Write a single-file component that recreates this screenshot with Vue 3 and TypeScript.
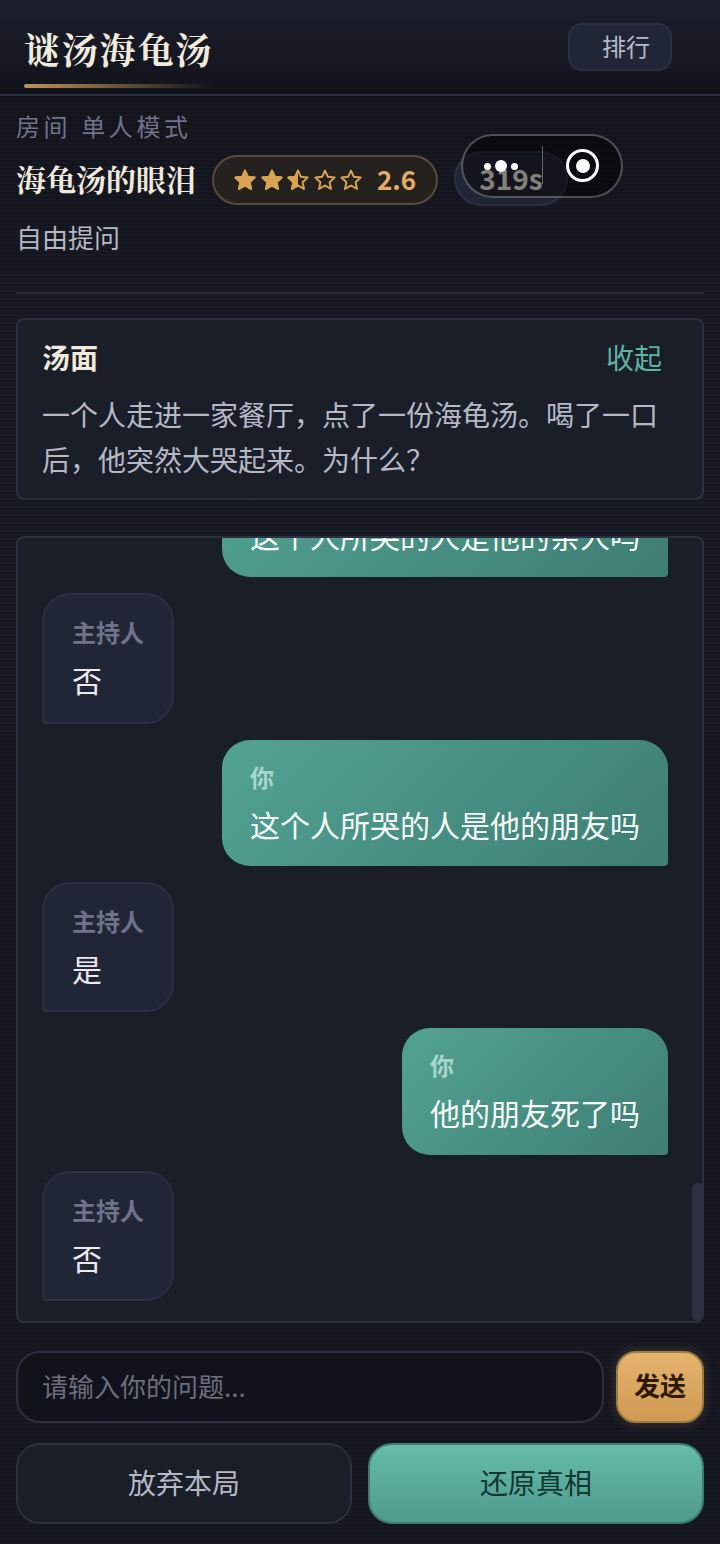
<template>
  <div class="page">
    <header class="top-bar">
      <div class="brand">
        <h1 class="brand-name">谜汤海龟汤</h1>
        <div class="brand-line"></div>
      </div>
      <button class="rank-btn">排行</button>
    </header>

    <section class="room">
      <div class="room-label"><span>房间</span><span>单人模式</span></div>
      <div class="room-row">
        <span class="room-title">海龟汤的眼泪</span>
        <div class="rating">
          <svg v-for="(s, i) in stars" :key="i" class="star" viewBox="0 0 24 24">
            <defs>
              <clipPath :id="'half' + i"><rect x="0" y="0" width="12" height="24" /></clipPath>
            </defs>
            <path :d="starPath" fill="none" stroke="#d9a352" stroke-width="2" stroke-linejoin="round" />
            <path v-if="s > 0" :d="starPath" fill="#d9a352" stroke="#d9a352" stroke-width="2" stroke-linejoin="round" :clip-path="s === 1 ? undefined : `url(#half${i})`" />
          </svg>
          <span class="rating-num">2.6</span>
        </div>
        <div class="timer">319s</div>
      </div>
      <div class="room-mode">自由提问</div>
      <div class="room-divider"></div>
    </section>

    <section class="card soup">
      <div class="soup-head">
        <span class="soup-title">汤面</span>
        <span class="soup-toggle">收起</span>
      </div>
      <p class="soup-text">一个人走进一家餐厅，点了一份海龟汤。喝了一口后，他突然大哭起来。为什么？</p>
    </section>

    <section class="card chat">
      <div v-for="(m, i) in messages" :key="i" class="bubble" :class="m.role">
        <div class="who">{{ m.role === 'user' ? '你' : '主持人' }}</div>
        <div class="said">{{ m.text }}</div>
      </div>
      <div class="scroll-thumb"></div>
    </section>

    <div class="input-row">
      <div class="ask">请输入你的问题...</div>
      <button class="send">发送</button>
    </div>

    <div class="actions">
      <button class="act quit">放弃本局</button>
      <button class="act reveal">还原真相</button>
    </div>

    <div class="capsule">
      <div class="dots"><i></i><b></b><i></i></div>
      <div class="cap-line"></div>
      <div class="ring"><span></span></div>
    </div>
  </div>
</template>

<script setup lang="ts">
interface Msg {
  role: 'user' | 'host'
  text: string
}

const starPath = 'M12 2.6l2.9 6.2 6.7.8-5 4.6 1.4 6.7-6-3.4-6 3.4 1.4-6.7-5-4.6 6.7-.8z'
const stars = [1, 1, 0.5, 0, 0]

const messages: Msg[] = [
  { role: 'user', text: '这个人所哭的人是他的亲人吗' },
  { role: 'host', text: '否' },
  { role: 'user', text: '这个人所哭的人是他的朋友吗' },
  { role: 'host', text: '是' },
  { role: 'user', text: '他的朋友死了吗' },
  { role: 'host', text: '否' },
]
</script>

<style>
html, body { margin: 0; background: #141620; }
</style>

<style scoped>
.page {
  position: relative;
  width: 720px;
  height: 1544px;
  overflow: hidden;
  display: flex;
  flex-direction: column;
  box-sizing: border-box;
  font-family: "Noto Sans CJK SC", "Noto Sans", sans-serif;
  background:
    repeating-linear-gradient(0deg, rgba(255,255,255,.012) 0 2px, rgba(0,0,0,.03) 2px 4px),
    linear-gradient(180deg, #111219 0%, #161823 20%, #141620 100%);
}
.top-bar {
  height: 96px;
  flex: none;
  box-sizing: border-box;
  border-bottom: 2px solid #2c2f3f;
  background: linear-gradient(180deg, #1b1e2c 0%, #11131c 100%);
  padding: 0 48px 0 24px;
  display: flex;
  justify-content: space-between;
}
.brand { width: 188px; }
.brand-name {
  margin: 24px 0 0;
  font-family: "Noto Serif CJK SC", "Liberation Serif", "Noto Sans CJK SC", serif;
  font-size: 36px;
  line-height: 50px;
  font-weight: 700;
  letter-spacing: 1.8px;
  color: #f0ebdd;
  white-space: nowrap;
}
.brand-line {
  margin-top: 10px;
  height: 4px;
  border-radius: 2px;
  background: linear-gradient(90deg, #c09355, rgba(192,147,85,0));
}
.rank-btn {
  margin-top: 23px;
  width: 104px;
  height: 48px;
  box-sizing: border-box;
  border: 2px solid #2b2f42;
  border-radius: 14px;
  background: #212637;
  color: #b6b8c6;
  font: 400 24px/42px "Noto Sans CJK SC", sans-serif;
  padding: 0 20px 2px 32px;
  text-align: right;
}
.room {
  padding: 12px 16px 0;
}
.room-label {
  display: flex;
  gap: 10px;
  font-size: 24px;
  line-height: 36px;
  letter-spacing: 3.6px;
  color: #70748a;
}
.room-row {
  margin-top: 7px;
  height: 58px;
  display: flex;
  align-items: center;
}
.room-title {
  padding-bottom: 4px;
  font-family: "Noto Serif CJK SC", "Liberation Serif", "Noto Sans CJK SC", serif;
  font-size: 30px;
  font-weight: 700;
  color: #f0ebdd;
  white-space: nowrap;
}
.rating {
  margin-left: 16px;
  width: 226px;
  height: 50px;
  box-sizing: border-box;
  border: 2px solid #5a4b38;
  border-radius: 25px;
  background: #24211f;
  padding: 0 20px 0 19px;
  display: flex;
  align-items: center;
  gap: 2.6px;
}
.star { width: 24px; height: 24px; flex: none; }
.rating-num {
  margin-left: 11px;
  padding-bottom: 3px;
  font-size: 26px;
  font-weight: 700;
  color: #e5ad63;
}
.timer {
  align-self: flex-start;
  margin-left: 16px;
  width: 114px;
  height: 55px;
  box-sizing: border-box;
  border: 2px solid #2b2f42;
  border-radius: 28px;
  background: #212637;
  text-align: center;
  font-size: 28px;
  font-weight: 700;
  line-height: 51px;
  color: #f0ebdd;
}
.room-mode {
  margin-top: 7px;
  font-size: 26px;
  line-height: 42px;
  color: #b6b8c6;
}
.room-divider {
  margin-top: 34px;
  height: 2px;
  background: #2c2f3f;
}
.card {
  margin: 0 16px;
  box-sizing: border-box;
  border: 2px solid #2c2f3f;
  border-radius: 8px;
  background: #1a1e29;
}
.soup {
  margin-top: 24px;
  height: 182px;
  padding: 17px 24px 0;
}
.soup-head {
  display: flex;
  justify-content: space-between;
  padding-right: 16px;
  line-height: 40px;
  font-size: 28px;
}
.soup-title { font-weight: 700; color: #f0ebdd; }
.soup-toggle { color: #5fb3a3; }
.soup-text {
  margin: 15px 0 0;
  font-size: 28px;
  line-height: 44.8px;
  color: #b6b8c6;
}
.chat {
  position: relative;
  margin-top: 36px;
  height: 787px;
  padding: 0 34px 20px 24px;
  display: flex;
  flex-direction: column;
  justify-content: flex-end;
  gap: 16px;
  overflow: hidden;
}
.bubble {
  box-sizing: border-box;
  flex: none;
}
.bubble.user {
  align-self: flex-end;
  height: 126.2px;
  padding: 20px 28px 0;
  border-radius: 28px 28px 4px 28px;
  background: linear-gradient(135deg, #52a394 0%, #3e7d74 100%);
  color: #f6fbf9;
}
.bubble.host {
  align-self: flex-start;
  height: 130.4px;
  width: 132px;
  padding: 20px 28px 0;
  border: 2px solid #2c2f42;
  border-radius: 28px 28px 28px 4px;
  background: #212637;
  color: #eceaf0;
}
.who {
  font-size: 24px;
  line-height: 34px;
  font-weight: 700;
}
.user .who { color: #a9d6cc; }
.host .who { color: #70748a; white-space: nowrap; }
.said {
  margin-top: 8px;
  font-size: 30px;
  line-height: 44px;
  white-space: nowrap;
}
.scroll-thumb {
  position: absolute;
  right: -2px;
  bottom: 0;
  width: 12px;
  height: 138px;
  border-radius: 6px;
  background: #2c3042;
}
.input-row {
  margin: 28px 16px 0;
  display: flex;
  gap: 12px;
}
.ask {
  flex: 1;
  height: 72px;
  box-sizing: border-box;
  border: 2px solid #2c2f3f;
  border-radius: 24px;
  background: #11131c;
  padding-left: 24px;
  font-size: 26px;
  line-height: 66px;
  color: #6c6e7c;
}
.send {
  width: 88px;
  height: 72px;
  box-sizing: border-box;
  border: 2px solid #9c7a48;
  border-radius: 20px;
  background: linear-gradient(180deg, #e5b46e 0%, #cf9a50 100%);
  box-shadow: 0 0 12px rgba(217,163,82,.25);
  font: 700 26px "Noto Sans CJK SC", sans-serif;
  color: #2f1a08;
  padding: 0 0 6px;
}
.actions {
  margin: 20px 16px 0;
  display: grid;
  grid-template-columns: 1fr 1fr;
  gap: 16px;
}
.act {
  height: 81px;
  box-sizing: border-box;
  border-radius: 24px;
  font: 400 28px "Noto Sans CJK SC", sans-serif;
  padding: 0 0 4px;
}
.quit {
  border: 2px solid #2c2f3f;
  background: #1a1e29;
  color: #b6b8c6;
}
.reveal {
  border: 2px solid #3f7a70;
  background: linear-gradient(180deg, #66bcab 0%, #4f9a8c 100%);
  color: #123630;
}
.capsule {
  position: absolute;
  left: 461px;
  top: 134px;
  width: 162px;
  height: 64px;
  box-sizing: border-box;
  border: 2px solid rgba(255,255,255,.28);
  border-radius: 32px;
  background: rgba(0,0,0,.45);
}
.dots {
  position: absolute;
  left: 21px;
  top: 23px;
  width: 34px;
  height: 14px;
  display: flex;
  align-items: center;
  justify-content: space-between;
}
.dots i { width: 7px; height: 7px; border-radius: 50%; background: #fff; }
.dots b { width: 12px; height: 12px; border-radius: 50%; background: #fff; }
.cap-line {
  position: absolute;
  left: 79px;
  top: 10px;
  width: 1px;
  height: 38px;
  background: rgba(255,255,255,.35);
}
.ring {
  position: absolute;
  left: 103px;
  top: 13px;
  width: 33px;
  height: 33px;
  box-sizing: border-box;
  border: 3px solid #fff;
  border-radius: 50%;
  display: flex;
  align-items: center;
  justify-content: center;
}
.ring span { width: 14px; height: 14px; border-radius: 50%; background: #fff; }
</style>
